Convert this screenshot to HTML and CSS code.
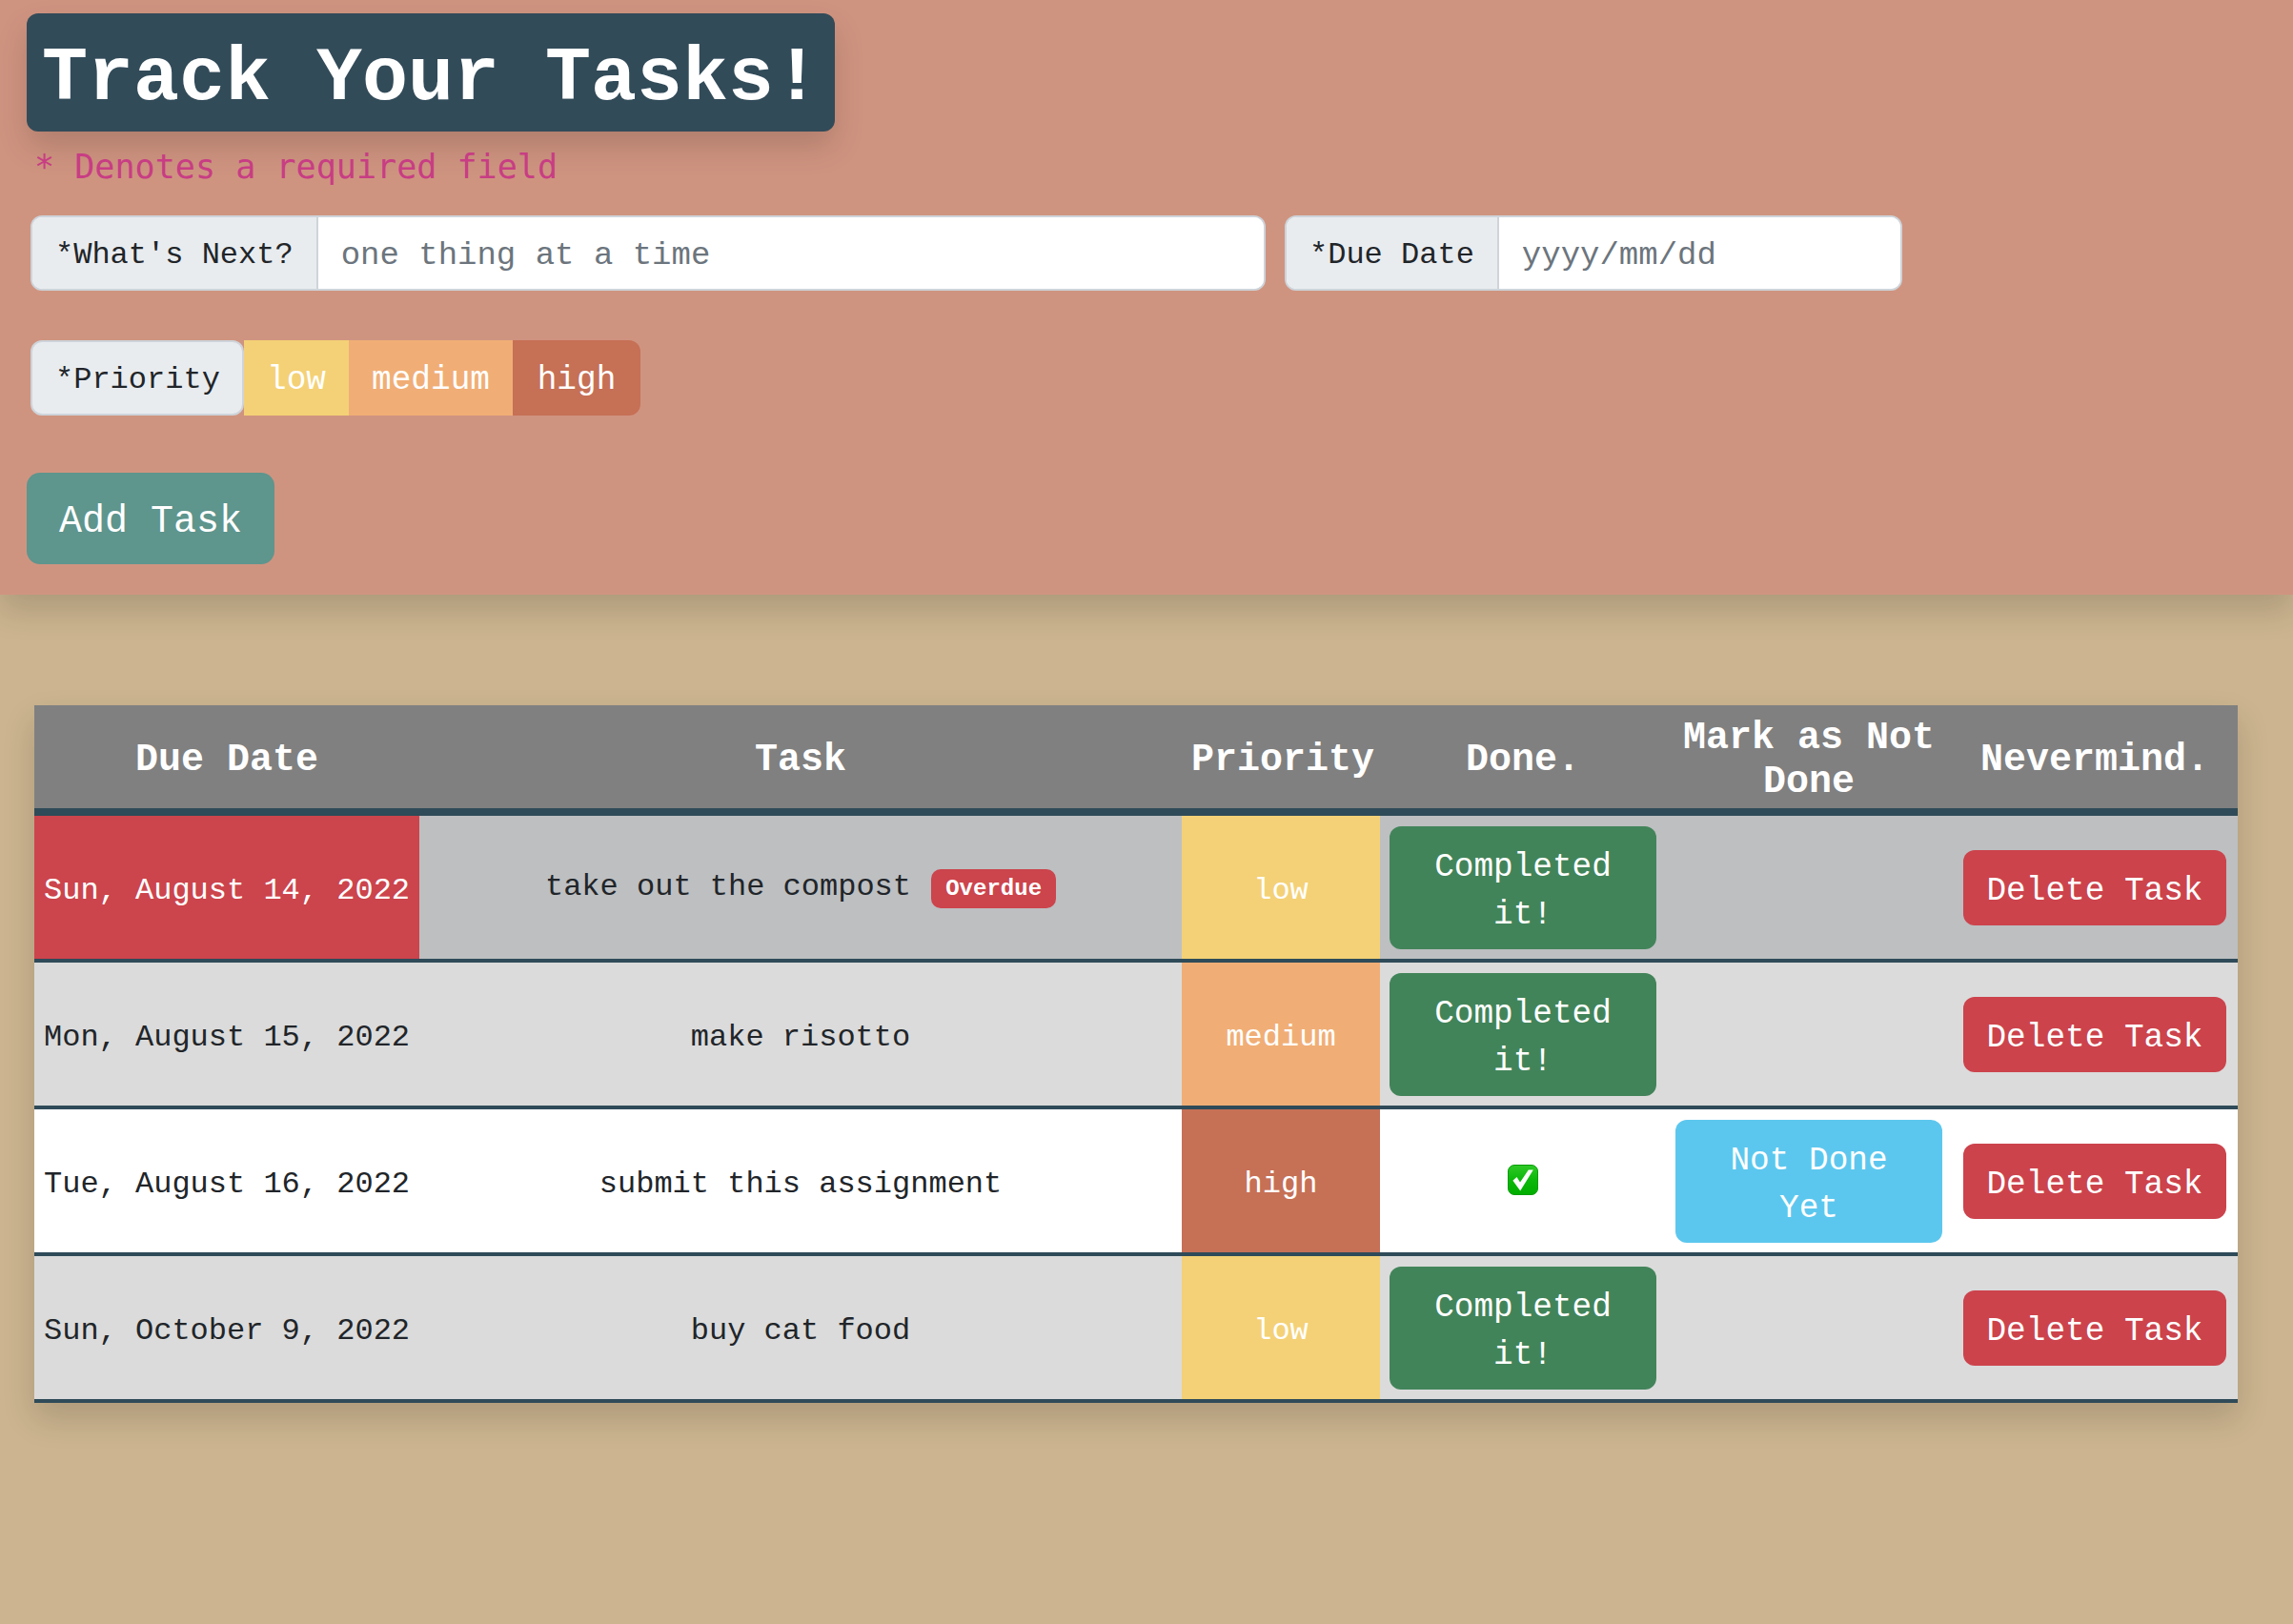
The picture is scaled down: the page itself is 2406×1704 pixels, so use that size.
FILE: index.html
```html
<!DOCTYPE html>
<html lang="en">
<head>
<meta charset="utf-8">
<title>Track Your Tasks!</title>
<link rel="stylesheet" href="styles.css">
</head>
<body>
<header class="top">
  <h1 class="title">Track Your Tasks!</h1>
  <p class="note">* Denotes a required field</p>
  <form class="task-form">
    <div class="form-row">
      <div class="group group-task">
        <label class="group-label" for="task">*What's Next?</label>
        <input class="group-input" id="task" type="text" placeholder="one thing at a time">
      </div>
      <div class="group group-date">
        <label class="group-label" for="due">*Due Date</label>
        <input class="group-input" id="due" type="text" placeholder="yyyy/mm/dd">
      </div>
    </div>
    <div class="form-row priority-row">
      <span class="group-label priority-label">*Priority</span>
      <span class="choice choice-low">low</span>
      <span class="choice choice-medium">medium</span>
      <span class="choice choice-high">high</span>
    </div>
    <button class="add-btn" type="button">Add Task</button>
  </form>
</header>
<main class="content">
  <table class="tasks">
    <colgroup>
      <col class="col-date"><col class="col-task"><col class="col-pri">
      <col class="col-btn"><col class="col-btn"><col class="col-btn">
    </colgroup>
    <thead>
      <tr>
        <th>Due Date</th><th>Task</th><th>Priority</th><th>Done.</th><th>Mark as Not Done</th><th>Nevermind.</th>
      </tr>
    </thead>
    <tbody>
      <tr class="row-overdue">
        <td class="date-cell date-overdue">Sun, August 14, 2022</td>
        <td class="cell-even">take out the compost <span class="badge">Overdue</span></td>
        <td class="pri pri-low">low</td>
        <td class="cell-even"><button class="btn btn-green" type="button">Completed it!</button></td>
        <td class="cell-even"></td>
        <td class="cell-even"><button class="btn btn-red" type="button">Delete Task</button></td>
      </tr>
      <tr class="row-grey">
        <td class="date-cell">Mon, August 15, 2022</td>
        <td>make risotto</td>
        <td class="pri pri-medium">medium</td>
        <td class="cell-even"><button class="btn btn-green" type="button">Completed it!</button></td>
        <td class="cell-even"></td>
        <td class="cell-even"><button class="btn btn-red" type="button">Delete Task</button></td>
      </tr>
      <tr class="row-white">
        <td class="date-cell">Tue, August 16, 2022</td>
        <td>submit this assignment</td>
        <td class="pri pri-high">high</td>
        <td class="cell-even">
          <svg class="check" viewBox="0 0 32 32" aria-label="done">
            <defs>
              <linearGradient id="checkFill" x1="0" y1="0" x2="0" y2="1">
                <stop offset="0" stop-color="#2fc926"/>
                <stop offset="0.5" stop-color="#0cb80a"/>
                <stop offset="1" stop-color="#00ae00"/>
              </linearGradient>
            </defs>
            <rect x="0.5" y="0.5" width="31" height="31" rx="6.5" fill="url(#checkFill)" stroke="#0a9c0a"/>
            <path d="M5.4 16.7 L9.5 13 L13 18.5 L21.8 5.6 L26.8 5.6 L13.2 27.4 Z" fill="#fff"/>
          </svg>
        </td>
        <td class="cell-even"><button class="btn btn-blue" type="button">Not Done Yet</button></td>
        <td class="cell-even"><button class="btn btn-red" type="button">Delete Task</button></td>
      </tr>
      <tr class="row-grey">
        <td class="date-cell">Sun, October 9, 2022</td>
        <td>buy cat food</td>
        <td class="pri pri-low">low</td>
        <td class="cell-even"><button class="btn btn-green" type="button">Completed it!</button></td>
        <td class="cell-even"></td>
        <td class="cell-even"><button class="btn btn-red" type="button">Delete Task</button></td>
      </tr>
    </tbody>
  </table>
</main>
</body>
</html>
```
FILE: styles.css
```css
* { box-sizing: border-box; }

html, body { margin: 0; padding: 0; }

body {
  min-height: 1704px;
  background: #cbb48f;
  color: #212529;
  font-family: "Liberation Mono", "Courier New", monospace;
  font-size: 32px;
  line-height: 48px;
}

.top {
  height: 624px;
  padding: 14px 28px 0;
  background: #cf9480;
  box-shadow: 0 16px 32px rgba(0, 0, 0, .15);
  position: relative;
}

.title {
  width: 848px;
  height: 124px;
  margin: 0 0 13px;
  padding: 21px 16px 7px;
  background: #324b59;
  color: #fff;
  font-size: 80px;
  font-weight: 700;
  line-height: 96px;
  white-space: nowrap;
  border-radius: 12px;
  box-shadow: 0 16px 32px rgba(0, 0, 0, .15);
}

.note {
  margin: 0 0 27px 8px;
  color: #c83d84;
  font-family: "DejaVu Sans Mono", monospace;
  font-size: 35.1px;
  line-height: 48px;
}

.form-row {
  display: flex;
  gap: 20px;
  margin-left: 4px;
}

.group {
  display: flex;
  height: 79px;
  border: 2px solid #ced4da;
  border-radius: 12px;
  overflow: hidden;
  background: #fff;
}

.group-task { width: 1296px; }
.group-date { width: 648px; }

.group-label {
  display: flex;
  align-items: center;
  flex: none;
  padding: 5px 24px 0;
  background: #e9ecef;
  border-right: 2px solid #ced4da;
  white-space: pre;
}

.group-input {
  flex: 1;
  min-width: 0;
  padding: 5px 24px 0;
  border: 0;
  outline: 0;
  background: #fff;
  color: #212529;
  font: inherit;
  font-size: 34px;
}

.group-input::placeholder { color: #6c757d; opacity: 1; }

.priority-row {
  gap: 0;
  height: 79px;
  margin-top: 52px;
}

.priority-label {
  width: 224px;
  border: 2px solid #ced4da;
  border-radius: 12px;
}

.choice {
  display: flex;
  align-items: center;
  justify-content: center;
  padding-top: 5px;
  color: #fff;
  font-size: 34.4px;
}

.choice-low { width: 110px; background: #f4d176; }
.choice-medium { width: 172px; background: #f0ae76; }
.choice-high { width: 134px; background: #c67056; border-radius: 0 12px 12px 0; }

.add-btn {
  display: block;
  width: 260px;
  height: 96px;
  margin-top: 60px;
  padding: 8px 0 0;
  border: 0;
  border-radius: 14px;
  background: #5e958d;
  color: #fff;
  font: inherit;
  font-size: 40px;
}

.content { padding: 116px 58px 0 36px; }

.tasks {
  width: 2312px;
  table-layout: fixed;
  border-collapse: separate;
  border-spacing: 0;
  text-align: center;
  box-shadow: 0 16px 32px rgba(0, 0, 0, .15);
}

.col-date { width: 404px; }
.col-task { width: 800px; }
.col-pri { width: 208px; }
.col-btn { width: 300px; }

.tasks th {
  height: 116px;
  padding: 8px 10px 0;
  background: #808080;
  border-bottom: 8px solid #2f4b59;
  color: #fff;
  font-size: 40px;
  font-weight: 700;
  line-height: 46px;
}

.tasks td {
  height: 154px;
  padding: 18px 10px 10px;
  border-bottom: 4px solid #2f4b59;
  vertical-align: middle;
}

.tasks .cell-even { padding: 10px; }
.tasks .date-cell { padding: 18px 0 10px; white-space: nowrap; }

.row-overdue td { background: #bdbfc1; }
.row-grey td { background: #dbdbdb; }
.row-white td { background: #fff; }

.tasks .date-overdue { background: #cc444c; color: #fff; }

.badge {
  display: inline-block;
  margin-left: 2px;
  padding: 0 15px;
  background: #cc444c;
  color: #fff;
  font-size: 24px;
  font-weight: 700;
  line-height: 41px;
  border-radius: 10px;
}

.tasks .pri { color: #fff; }
.tasks .pri-low { background: #f4d176; }
.tasks .pri-medium { background: #f0ae76; }
.tasks .pri-high { background: #c67056; }

.btn {
  display: inline-block;
  padding: 18px 24px 11px;
  border: 0;
  border-radius: 12px;
  color: #fff;
  font: inherit;
  font-size: 34.4px;
  line-height: 50px;
  vertical-align: middle;
}

.btn-green { width: 280px; background: #42845a; }
.btn-blue { width: 280px; background: #5cc7ee; }
.btn-red { width: 276px; background: #cc434c; }

.check {
  display: block;
  width: 32px;
  height: 32px;
  margin: -2px auto 0;
}
```
